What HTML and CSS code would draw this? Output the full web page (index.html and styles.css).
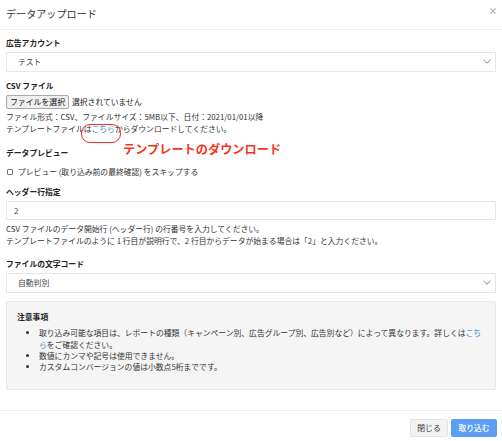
FILE: index.html
```html
<!DOCTYPE html>
<html lang="ja">
<head>
<meta charset="utf-8">
<link rel="stylesheet" href="styles.css">
</head>
<body>
<div class="page">
  <header class="header">
    <h1 class="title">データアップロード</h1>
    <span class="close"><svg width="6" height="6" viewBox="0 0 6 6"><path d="M0.5 0.5L5.5 5.5M5.5 0.5L0.5 5.5" stroke="#b5b5b5" stroke-width="1.1"/></svg></span>
  </header>
  <main class="body">
    <div class="label first">広告アカウント</div>
    <div class="select">
      <span>テスト</span>
      <svg class="chev" width="8" height="5" viewBox="0 0 8 5"><path d="M0.5 0.8L4 4.2L7.5 0.8" fill="none" stroke="#777" stroke-width="0.9"/></svg>
    </div>

    <div class="label gap-a">CSV ファイル</div>
    <div class="file-row">
      <span class="file-btn">ファイルを選択</span>
      <span class="file-none">選択されていません</span>
    </div>
    <div class="text info">ファイル形式：CSV、ファイルサイズ：5MB以下、日付：2021/01/01以降<br>テンプレートファイルは<a class="link">こちら</a>からダウンロードしてください。</div>

    <div class="label gap-b">データプレビュー</div>
    <label class="check-row"><span class="checkbox"></span><span>プレビュー (取り込み前の最終確認) をスキップする</span></label>

    <div class="label gap-c">ヘッダー行指定</div>
    <div class="input">2</div>
    <div class="text help">CSV ファイルのデータ開始行 (ヘッダー行) の行番号を入力してください。<br>テンプレートファイルのように 1 行目が説明行で、2 行目からデータが始まる場合は「2」と入力ください。</div>

    <div class="label gap-d">ファイルの文字コード</div>
    <div class="select">
      <span>自動判別</span>
      <svg class="chev" width="8" height="5" viewBox="0 0 8 5"><path d="M0.5 0.8L4 4.2L7.5 0.8" fill="none" stroke="#777" stroke-width="0.9"/></svg>
    </div>

    <section class="notes">
      <div class="notes-title">注意事項</div>
      <ul class="notes-list">
        <li>取り込み可能な項目は、レポートの種類（キャンペーン別、広告グループ別、広告別など）によって異なります。詳しくは<a class="link">こちら</a>をご確認ください。</li>
        <li>数値にカンマや記号は使用できません。</li>
        <li>カスタムコンバージョンの値は小数点5桁までです。</li>
      </ul>
    </section>
  </main>
  <footer class="footer">
    <span class="btn btn-close">閉じる</span>
    <span class="btn btn-primary">取り込む</span>
  </footer>

  <div class="annot-ring"></div>
  <div class="annot-text">テンプレートのダウンロード</div>
</div>
</body>
</html>
```

FILE: styles.css
```css
* { box-sizing: border-box; }
html, body { margin: 0; padding: 0; background: #fff; }
body {
  font-family: "Noto Sans CJK JP", "Noto Sans", sans-serif;
  color: #333;
  font-size: 7.8px;
  line-height: 11.4px;
}
.page { position: relative; width: 502px; height: 441px; overflow: hidden; }

.header {
  height: 30px;
  border-bottom: 1px solid #f0f0f0;
  display: flex;
  align-items: center;
  justify-content: space-between;
  padding: 0 6px 2px 6px;
}
.title { margin: 0; font-size: 10.1px; font-weight: 400; color: #333; line-height: 14px; }
.close { display: flex; align-items: center; margin-top: -6px; }

.body { padding: 7.3px 6px 0 6px; }

.label { font-weight: 700; color: #222; height: 11.4px; margin-bottom: 3.3px; }
.gap-a { margin-top: 8.3px; }
.gap-b { margin-top: 13.2px; margin-bottom: 7.6px; }
.gap-c { margin-top: 8.6px; }
.gap-d { margin-top: 12.2px; }

.select {
  height: 20px;
  border: 1px solid #e6e6e6;
  display: flex;
  align-items: center;
  justify-content: space-between;
  padding: 0 4px 0 11px;
  color: #444;
}
.chev { display: block; }

.file-row { display: flex; align-items: center; height: 14px; gap: 3px; }
.file-btn {
  height: 14px;
  width: 63px;
  display: flex;
  align-items: center;
  justify-content: center;
  background: #efefef;
  border: 1px solid #a9a9a9;
  border-radius: 2px;
  color: #111;
  font-size: 7.9px;
}
.file-none { color: #222; }

.text { color: #333; }
.info { margin-top: 2.3px; }
.link { color: #3a8bd6; text-decoration: none; }

.check-row { display: flex; align-items: center; height: 11.4px; gap: 5px; padding-left: 1px; color: #333; }
.checkbox { width: 6px; height: 6px; border: 0.8px solid #777; border-radius: 1px; background: #fff; }

.input {
  margin-top: 0;
  height: 19px;
  border: 1px solid #e6e6e6;
  display: flex;
  align-items: center;
  padding-left: 7px;
  color: #444;
}
.help { margin-top: 3.3px; }

.notes {
  margin-top: 8px;
  background: #f5f5f5;
  border: 1px solid #e8e8e8;
  border-radius: 2px;
  padding: 9.3px 9px 16.1px 10px;
}
.notes-title { font-weight: 700; color: #222; height: 11.4px; }
.notes-list { margin: 4.6px 0 0 0; padding-left: 22px; color: #333; }
.notes-list li { line-height: 11.4px; }

.footer {
  margin-top: 20px;
  border-top: 1px solid #f0f0f0;
  display: flex;
  justify-content: flex-end;
  gap: 3px;
  padding: 8px 5px 0 0;
}
.btn {
  height: 18px;
  display: flex;
  align-items: center;
  justify-content: center;
  border-radius: 2px;
  font-size: 7.8px;
}
.btn-close { width: 38px; background: #f3f3f3; border: 1px solid #e3e3e3; color: #333; }
.btn-primary { width: 46px; background: #5b9ef3; color: #fff; font-weight: 500; }

.annot-ring {
  position: absolute;
  left: 81px;
  top: 123.5px;
  width: 40px;
  height: 19.5px;
  border: 1.5px solid #f2311f;
  border-radius: 9px;
}
.annot-text {
  position: absolute;
  left: 123px;
  top: 141px;
  font-size: 12.2px;
  line-height: 16px;
  font-weight: 700;
  color: #f5341f;
  white-space: nowrap;
}
```
